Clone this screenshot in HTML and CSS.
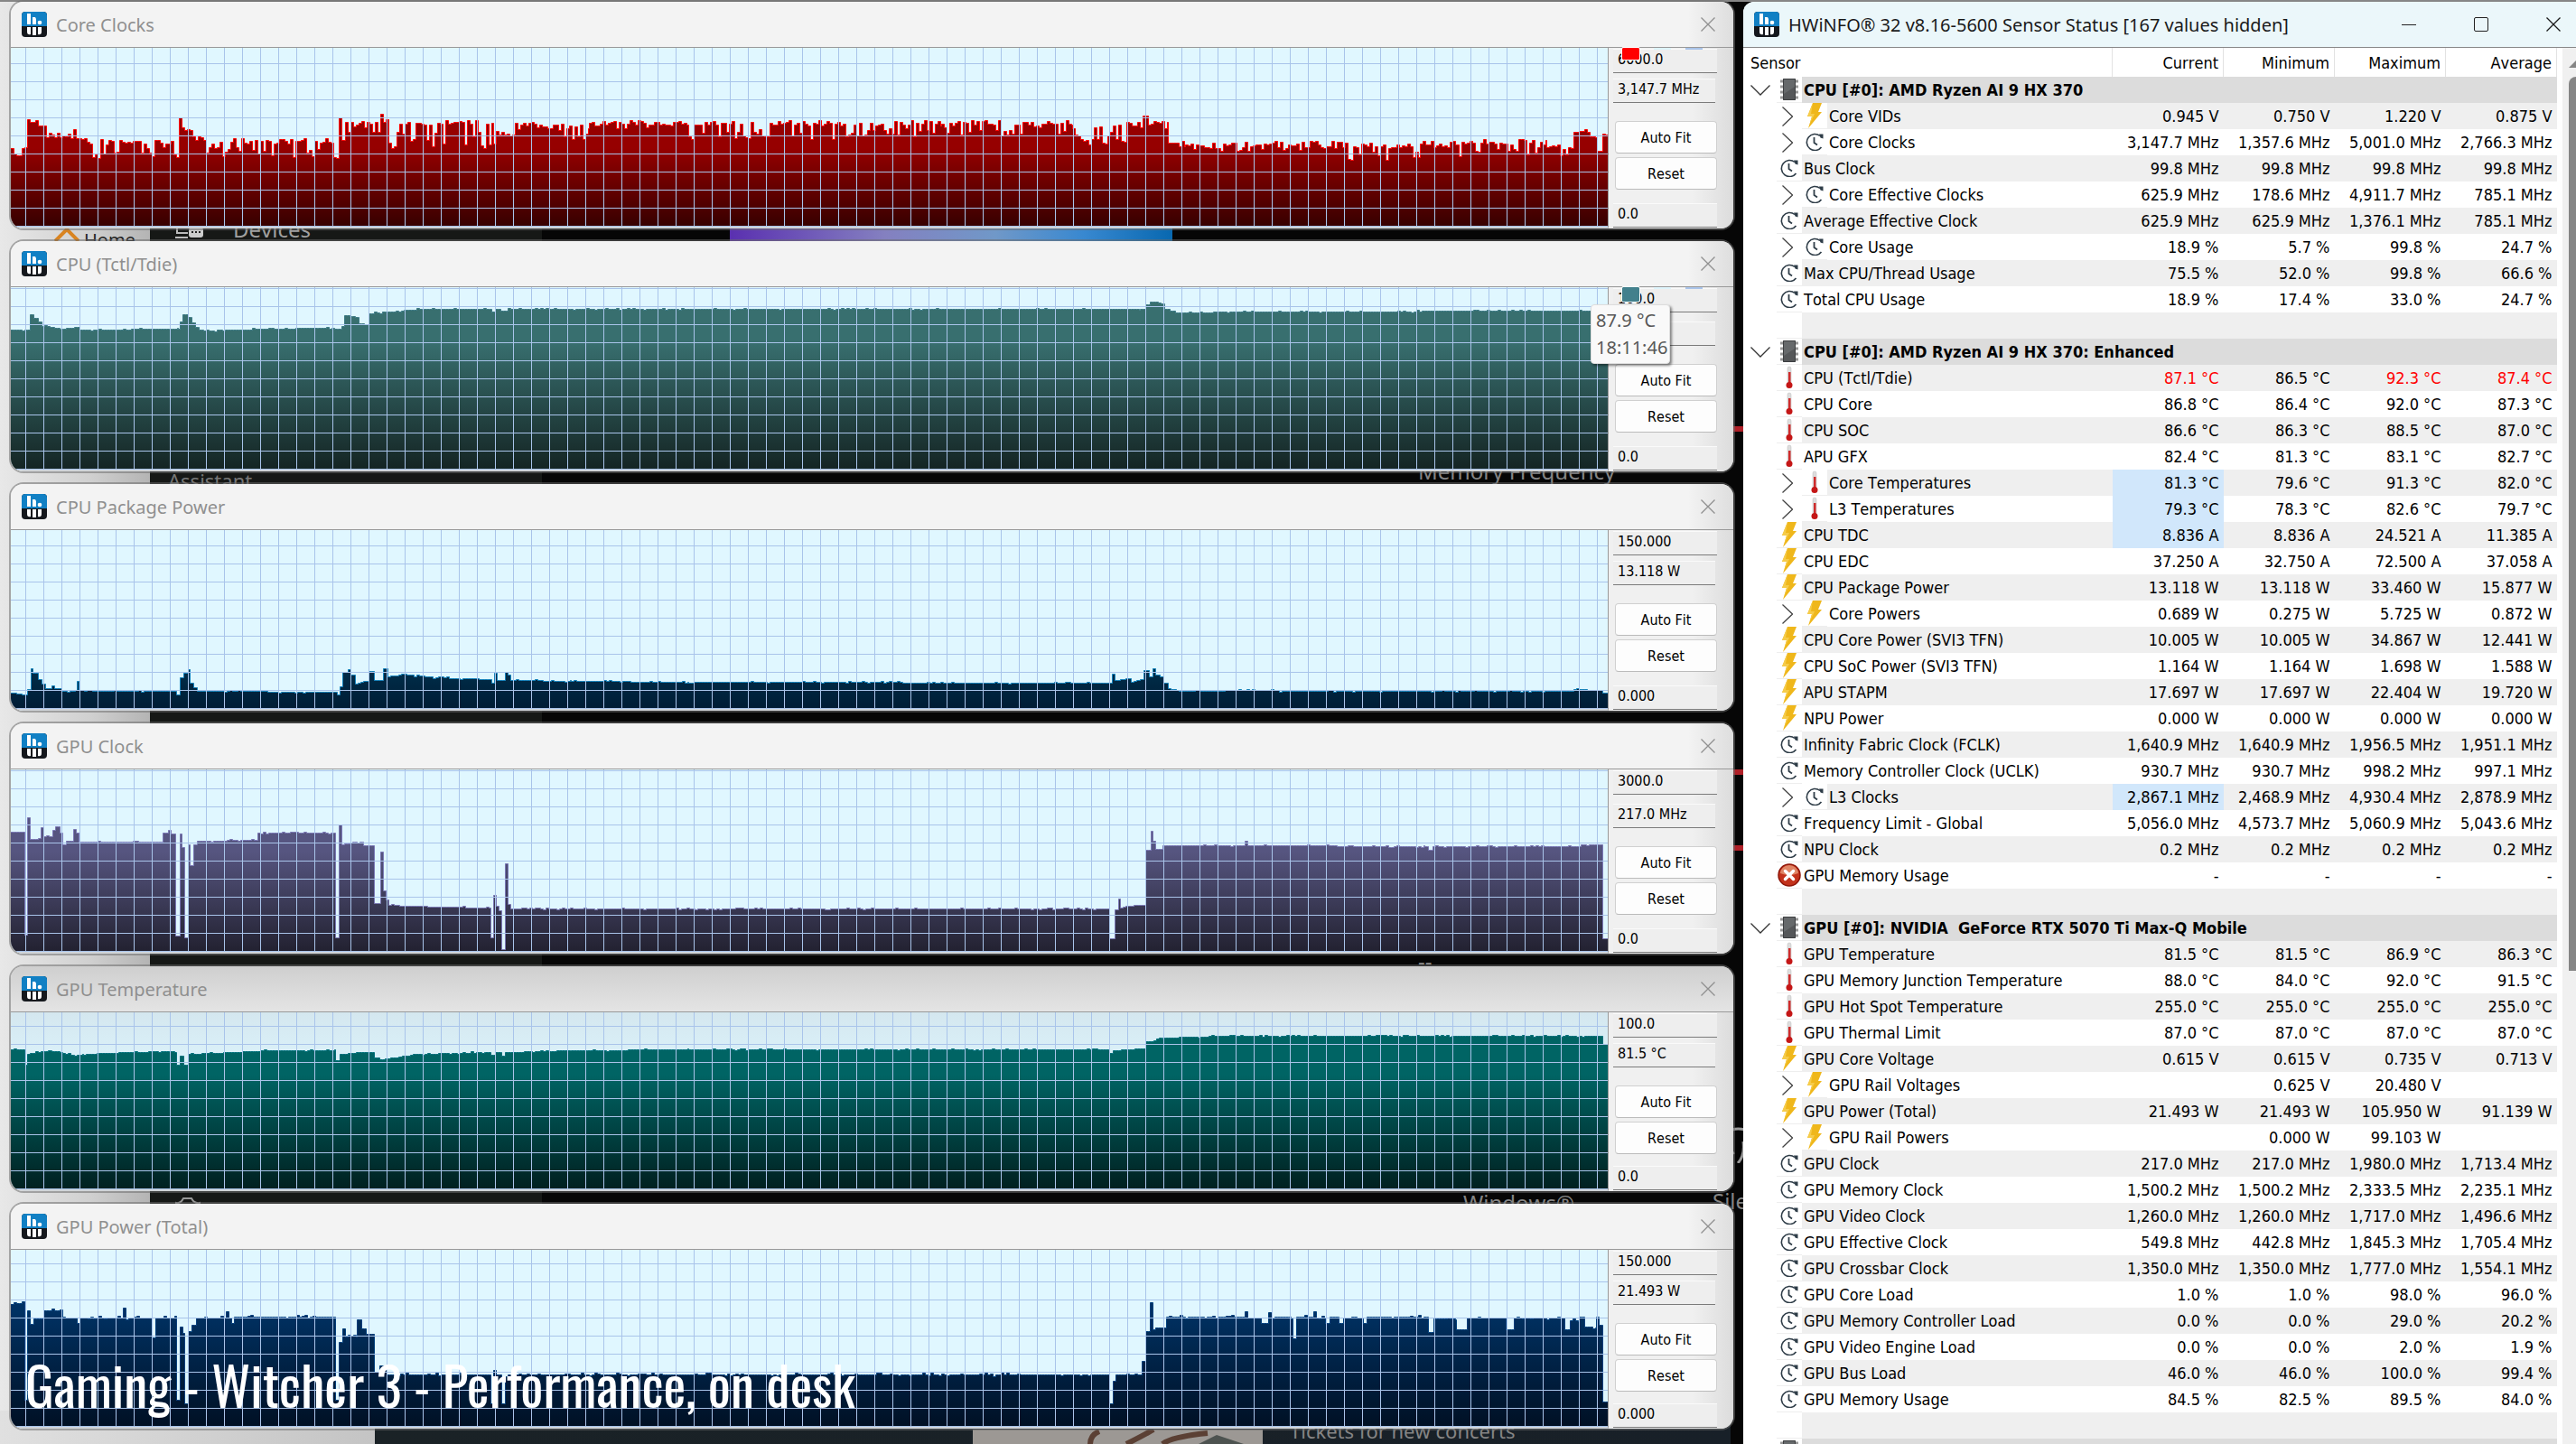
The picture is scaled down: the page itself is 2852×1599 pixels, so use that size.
FILE: index.html
```
<!DOCTYPE html>
<html lang="en">
<head>
<meta charset="utf-8">
<title>HWiNFO Sensor Status</title>
<link rel="stylesheet" href="styles.css">
</head>
<body>
<svg class="defs" aria-hidden="true">
  <symbol id="logo" viewBox="0 0 28 28">
    <rect width="28" height="28" rx="4" fill="#15181d"/>
    <path d="M0 16V4a4 4 0 0 1 4-4h20a4 4 0 0 1 4 4v12z" fill="#1180c4"/>
    <path d="M6 2h4v12H6zM12 6h3l1 2v6h-4z" fill="#fff"/>
    <circle cx="20" cy="12" r="2.300" fill="#fff"/>
    <path d="M6 17h4v8q-4 1-4-3zM12 17h4v9h-4zM18 17h4v5q0 4-4 3z" fill="#fff"/>
  </symbol>
  <symbol id="close" viewBox="0 0 16 16"><path d="M0.500 0.500l15 15M15.500 0.500l-15 15" fill="none" stroke="currentColor" stroke-width="1.300"/></symbol>
  <symbol id="down" viewBox="0 0 22 12"><path d="M0.500 0.500L11 11 21.500 0.500" fill="none" stroke="#333" stroke-width="1.300"/></symbol>
  <symbol id="right" viewBox="0 0 12 22"><path d="M0.500 0.500L11.500 11 0.500 21.500" fill="none" stroke="#444" stroke-width="1.300"/></symbol>
  <symbol id="chip" viewBox="0 0 20 26">
    <path d="M0 4h20M0 10h20M0 16h20M0 22h20" stroke="#999" stroke-width="3" stroke-dasharray="3 14"/>
    <rect x="3" y="1" width="14" height="24" rx="1" fill="#555759"/><path d="M4 2h12v8L4 18z" fill="#66696b"/>
    <path d="M3.500 1.500h13v23h-13z" fill="none" stroke="#3c3e40"/>
  </symbol>
  <symbol id="volt" viewBox="0 0 18 28"><path d="M7 0h10l-4 10h4L2 28l4-13H1z" fill="#efb71b"/><path d="M7 0L1 15h5L3.500 24 9 12H5z" fill="#f6cc4a"/></symbol>
  <symbol id="clock" viewBox="0 0 20 20">
    <path d="M17.500 16a9 9 0 1 1-1.500-12.500" fill="none" stroke="#2f3d48" stroke-width="1.600"/>
    <path d="M15 1.500h4.500v5l-3-1z" fill="#2f3d48"/>
    <path d="M9.500 5v6l3.500 2.500" fill="none" stroke="#2f3d48" stroke-width="1.800"/>
  </symbol>
  <symbol id="temp" viewBox="0 0 10 26">
    <rect x="3" y="1" width="4" height="20" rx="2" fill="#ddd" stroke="#bbb" stroke-width="0.500"/>
    <path d="M4 7h2.500v12H4z" fill="#cf2b2b"/><circle cx="5" cy="21.500" r="3.500" fill="#c41616"/>
  </symbol>
  <symbol id="error" viewBox="0 0 26 26">
    <circle cx="13" cy="13" r="12" fill="#c3321b" stroke="#8e1508" stroke-width="1.500"/>
    <path d="M3 11a10 9 0 0 1 20 0q-10 4-20 0z" fill="#e08565"/>
    <path d="M8.500 8.500l9 9M17.500 8.500l-9 9" stroke="#fff" stroke-width="3.500" stroke-linecap="round"/>
  </symbol>
</svg>

<div class="screen">
  <div class="desktop" aria-hidden="true">
    <div class="sheet"></div>
    <div class="panel"></div>
    <div class="banner"></div>
    <div class="footer-sheet"></div>
    <svg class="photo" viewBox="0 0 321 16" preserveAspectRatio="none"><rect width="321" height="16" fill="#9c9894"/><path d="M130 16q0-10 10-14M170 16q20-10 30-16M210 16q10-8 50-12" stroke="#5b4034" stroke-width="6" fill="none"/><path d="M250 16l20-10 30 10z" fill="#4d5350"/></svg>
    <svg class="home-icon" viewBox="0 0 28 16"><path d="M1 15L14 2l13 13" fill="none" stroke="#d98421" stroke-width="4"/></svg>
    <svg class="device-icon" viewBox="0 0 34 14"><path d="M4 0v6h12M2 11h14" stroke="#bbb" stroke-width="2" fill="none"/><rect x="17" y="0" width="16" height="11" rx="3" fill="#ccc"/><path d="M20 5h10" stroke="#222" stroke-width="2" stroke-dasharray="2 2"/></svg>
    <svg class="gear-icon" viewBox="0 0 28 8"><path d="M1 8V6q5 1 8-5h9q3 6 9 5v2" fill="none" stroke="#999" stroke-width="2"/></svg>
    <svg class="ring-icon" viewBox="0 0 24 40"><path d="M2 6Q10 0 22 3M4 32l6-4M14 40q8-8 6-24" fill="none" stroke="#999" stroke-width="3"/></svg>
    <span class="word home">Home</span>
    <span class="word devices">Devices</span>
    <span class="word assistant">Assistant</span>
    <span class="word memory">Memory Frequency</span>
    <span class="word windows">Windows®</span>
    <span class="word silent">Silent</span>
    <span class="word tickets">Tickets for new concerts</span>
    <span class="word dashes">--</span>
    <i class="mark mark-1"></i><i class="mark mark-2"></i><i class="mark mark-3"></i>
  </div>

  <main class="workspace">
    <div class="graphs">
      <section class="window core">
        <header class="titlebar"><svg class="logo"><use href="#logo"/></svg><h2>Core Clocks</h2><button class="close" aria-label="Close"><svg><use href="#close"/></svg></button></header>
        <div class="body">
          <div class="chart" data-series="core"></div>
          <div class="side">
            <div class="swatches"><i class="swatch line"></i><i class="swatch back"></i><i class="swatch grid"></i></div>
            <output class="box">6000.0</output><output class="box value">3,147.7 MHz</output>
            <div class="buttons"><button>Auto Fit</button><button>Reset</button></div>
            <output class="box low">0.0</output>
          </div>
        </div>
      </section>

      <section class="window tall tctl">
        <header class="titlebar"><svg class="logo"><use href="#logo"/></svg><h2>CPU (Tctl/Tdie)</h2><button class="close" aria-label="Close"><svg><use href="#close"/></svg></button></header>
        <div class="body">
          <div class="chart" data-series="tctl"></div>
          <div class="side">
            <div class="swatches"><i class="swatch line"></i><i class="swatch back"></i><i class="swatch grid"></i></div>
            <output class="box">100.0</output><output class="box value"></output>
            <div class="buttons"><button>Auto Fit</button><button>Reset</button></div>
            <output class="box low">0.0</output>
          </div>
          <div class="tooltip" role="tooltip">87.9 °C<br>18:11:46</div>
        </div>
      </section>

      <section class="window package">
        <header class="titlebar"><svg class="logo"><use href="#logo"/></svg><h2>CPU Package Power</h2><button class="close" aria-label="Close"><svg><use href="#close"/></svg></button></header>
        <div class="body">
          <div class="chart" data-series="package"></div>
          <div class="side">
            <output class="box">150.000</output><output class="box value">13.118 W</output>
            <div class="buttons"><button>Auto Fit</button><button>Reset</button></div>
            <output class="box low">0.000</output>
          </div>
        </div>
      </section>

      <section class="window tall gclock">
        <header class="titlebar"><svg class="logo"><use href="#logo"/></svg><h2>GPU Clock</h2><button class="close" aria-label="Close"><svg><use href="#close"/></svg></button></header>
        <div class="body">
          <div class="chart" data-series="gclock"></div>
          <div class="side">
            <output class="box">3000.0</output><output class="box value">217.0 MHz</output>
            <div class="buttons"><button>Auto Fit</button><button>Reset</button></div>
            <output class="box low">0.0</output>
          </div>
        </div>
      </section>

      <section class="window short gtemp">
        <header class="titlebar"><svg class="logo"><use href="#logo"/></svg><h2>GPU Temperature</h2><button class="close" aria-label="Close"><svg><use href="#close"/></svg></button></header>
        <div class="body">
          <div class="chart" data-series="gtemp"></div>
          <div class="side">
            <output class="box">100.0</output><output class="box value">81.5 °C</output>
            <div class="buttons"><button>Auto Fit</button><button>Reset</button></div>
            <output class="box low">0.0</output>
          </div>
        </div>
      </section>

      <section class="window short gpower">
        <header class="titlebar"><svg class="logo"><use href="#logo"/></svg><h2>GPU Power (Total)</h2><button class="close" aria-label="Close"><svg><use href="#close"/></svg></button></header>
        <div class="body">
          <div class="chart" data-series="gpower"></div>
          <div class="side">
            <output class="box">150.000</output><output class="box value">21.493 W</output>
            <div class="buttons"><button>Auto Fit</button><button>Reset</button></div>
            <output class="box low">0.000</output>
          </div>
        </div>
      </section>
    </div>

    <section class="sensors">
      <header class="titlebar">
        <svg class="logo"><use href="#logo"/></svg>
        <h1>HWiNFO® 32 v8.16-5600 Sensor Status [167 values hidden]</h1>
        <button class="minimize" aria-label="Minimize"></button>
        <button class="maximize" aria-label="Maximize"></button>
        <button class="close" aria-label="Close"><svg><use href="#close"/></svg></button>
      </header>
      <div class="list">
        <table>
          <colgroup><col><col class="num"><col class="num"><col class="num"><col class="num"></colgroup>
          <thead><tr><th>Sensor</th><th>Current</th><th>Minimum</th><th>Maximum</th><th>Average</th></tr></thead>
          <tbody id="rows"></tbody>
        </table>
        <div class="scrollbar"><i class="arrow"></i><i class="thumb"></i></div>
      </div>
    </section>
  </main>

  <p class="caption">Gaming - Witcher 3 - Performance, on desk</p>
</div>
<script src="app.js"></script>
</body>
</html>
```
FILE: styles.css
```
* { box-sizing: border-box; }
html, body { margin: 0; height: 100%; }
body { font-family: "DejaVu Sans Condensed", "DejaVu Sans", sans-serif; font-stretch: condensed; font-kerning: none; font-size: 18px; color: #000; background: #060606; }
button { font: inherit; color: inherit; border: 0; padding: 0; background: none; }
h1, h2, p { margin: 0; font-weight: 400; }
.defs { position: absolute; width: 0; height: 0; }
.screen { position: relative; height: 100vh; overflow: hidden; }

/* desktop seen between the windows */
.desktop { position: absolute; inset: 0; background: #060606; border-top: 2px solid #868686; overflow: hidden; }
.desktop > * { position: absolute; }
.sheet { left: 0; top: 0; bottom: 0; width: 166px; background: linear-gradient(90deg, #e8e8e8, #d0d0d0 60%, #b4b4b4); }
.panel { left: 166px; top: 0; bottom: 0; width: 434px; background: #161816; }
.banner { left: 808px; top: 250px; width: 490px; height: 16px; background: linear-gradient(90deg, #5a30b0, #8480c0 35%, #7098c8 60%, #3888d0 80%, #0868b0); }
.footer-sheet { left: 0; right: 936px; top: 1560px; bottom: 0; background: linear-gradient(90deg, #e0e0e0, #c4c4c4 415px, #1a2226 415px, #182028); }
.photo { left: 1077px; top: 1581px; width: 321px; height: 16px; }
.home-icon { left: 60px; top: 250px; width: 28px; height: 16px; }
.device-icon { left: 192px; top: 250px; width: 34px; height: 14px; }
.gear-icon { left: 194px; top: 1324px; width: 28px; height: 8px; }
.ring-icon { left: 1910px; top: 1246px; width: 24px; height: 40px; }
.word { font-family: "Noto Sans", sans-serif; font-size: 24px; line-height: 32px; color: #858585; white-space: nowrap; }
.home { left: 93px; top: 248px; font-size: 20px; color: #222; }
.devices { left: 258px; top: 236px; color: #a0a0a0; }
.assistant { left: 186px; top: 514px; font-size: 22px; color: #777; }
.memory { left: 1570px; top: 504px; }
.windows { left: 1620px; top: 1314px; }
.silent { left: 1896px; top: 1312px; }
.tickets { left: 1428px; top: 1566px; font-size: 22px; }
.dashes { left: 1570px; top: 1046px; }
.mark { left: 1918px; width: 14px; height: 6px; background: #b02028; }
.mark-1 { top: 470px; } .mark-2 { top: 850px; } .mark-3 { top: 934px; }

/* windows */
.workspace { position: relative; height: 100%; display: grid; grid-template-columns: minmax(0, 1fr) 922px; gap: 11px; padding: 2px 0 0 12px; }
.graphs { display: flex; flex-direction: column; gap: 14px; min-width: 0; }
.window { background: #f3f3f3; border-radius: 14px; overflow: hidden; box-shadow: 0 0 0 2px #6b6b6b88; flex: none; }
.titlebar { display: flex; align-items: center; height: 51px; padding: 0 20px 0 12px; font-family: "Noto Sans", sans-serif; font-size: 20px; font-kerning: auto; border-bottom: 1px solid #999; }
.window .titlebar { color: #8f8f8f; background: linear-gradient(270deg, #dedede, #f3f3f3 50px); }
.titlebar h1, .titlebar h2 { flex: 1; font-size: inherit; margin-left: 10px; white-space: nowrap; }
.logo { width: 28px; height: 28px; flex: none; }
.close svg { display: block; width: 16px; height: 16px; }
.body { position: relative; display: grid; grid-template-columns: minmax(0, 1fr) 138px; height: 200px; }
.tall .body { height: 204px; }
.short .body { height: 198px; }
.chart { position: relative; background: #e0f7ff; border-right: 1px solid #999; border-bottom: 2px solid #d0d4d8; overflow: hidden; }
.chart svg { display: block; width: 100%; height: 100%; }
.chart::after { content: ""; position: absolute; inset: 0; background-image: linear-gradient(0deg, #a9c4ea 1px, transparent 1px), linear-gradient(90deg, #a9c4ea 1px, transparent 1px); background-size: 20px 20px; background-position: 16px bottom; }
.side { position: relative; display: flex; flex-direction: column; padding: 1px 18px 1px 5px; font-size: 16px; background: linear-gradient(270deg, #dcdcdc, #f0f0f0 45px); }
.box { height: 27px; padding: 1px 5px; line-height: 20px; border-bottom: 1px solid #7b7b7b; border-top: 1px solid #fafafa; background: #eee; }
.value { margin-top: 6px; margin-right: 2px; }
.tall .value { margin-top: 10px; }
.buttons { display: flex; flex-direction: column; gap: 4px; margin-top: 20px; padding-left: 2px; }
.buttons button { height: 36px; background: #fdfdfd; border: 1px solid #d0d0d0; border-bottom-color: #bbb; border-radius: 4px; }
.low { margin-top: auto; }
.swatches { position: absolute; top: 0; left: 15px; display: flex; gap: 16px; align-items: flex-start; }
.swatch { width: 19px; height: 2px; }
.swatch.line { height: 13px; background: red; outline: 1px solid #fff; border-radius: 1px; }
.tctl .swatch.line { height: 16px; background: #42808c; }
.swatch.back { background: #def5fc; }
.swatch.grid { background: #a9c4ea; }
.tooltip { position: absolute; right: 70px; top: 19px; width: 88px; padding: 2px 5px; font: 20px/30px "Noto Sans", sans-serif; color: #575757; background: #f9f9f9; border: 1px solid #ddd; border-radius: 4px; box-shadow: 2px 2px 3px #0007; white-space: nowrap; }
.gtemp .titlebar { background: linear-gradient(#cfcfcf, #e4e4e4); }
.gtemp .chart { background: linear-gradient(#d4e7ef, #dcf3fb 30%); }

/* sensor table */
.sensors { min-width: 0; height: 100%; overflow: hidden; background: #fff; border-top-left-radius: 12px; }
.sensors .titlebar { background: #ebf7fa; padding-right: 17px; color: #1a1a1a; border-color: #888; }
.minimize { width: 16px; height: 1px; background: #222; margin-right: 64px; }
.maximize { width: 16px; height: 16px; border: 1px solid #222; border-radius: 2px; margin-right: 64px; }
.list { display: grid; grid-template-columns: minmax(0, 1fr) 15px; gap: 6px; }
table { width: 100%; table-layout: fixed; border-collapse: collapse; }
.num { width: 123px; }
th { height: 32px; padding: 1px 5px 0; font-weight: 400; text-align: right; border-right: 1px solid #e2e2e2; }
th:first-child { text-align: left; padding-left: 8px; }
td { height: 29px; padding: 1px 5px 0; line-height: 28px; text-align: right; white-space: nowrap; }
td.name { padding: 0; }
.item { display: flex; text-align: left; }
.toggle { flex: none; display: flex; align-items: center; justify-content: center; width: 37px; height: 29px; }
.icon { flex: none; display: flex; align-items: center; justify-content: center; width: 28px; height: 29px; background: #fff; border-bottom: 1px solid #eee; }
.label { flex: 1; min-width: 0; height: 29px; padding: 1px 0 0 2px; white-space: pre; }
.child .toggle { width: 28px; margin-left: 37px; padding-right: 4px; }
.odd td:not(.name), .odd .label { background: #efefef; }
.group .label, .group td:not(.name) { background: #dcdcdc; font-weight: 700; }
.group .item { position: relative; z-index: 1; }
.hot { color: #f00; }
.list tbody td.new { background: #d1e7fb; }
.i-down { width: 22px; height: 12px; } .i-right { width: 12px; height: 22px; }
.i-chip { width: 20px; height: 26px; } .i-volt { width: 18px; height: 28px; }
.i-clock { width: 20px; height: 20px; } .i-temp { width: 10px; height: 26px; } .i-error { width: 26px; height: 26px; }
.scrollbar { background: #f0f0f0; display: flex; flex-direction: column; align-items: flex-end; }
.arrow { margin-top: 14px; border: solid transparent; border-width: 0 0 8px 8px; border-bottom-color: #858585; }
.thumb { margin-top: 10px; width: 8px; height: 990px; background: #858585; border-top-left-radius: 8px; }

.caption { position: absolute; left: 28px; bottom: 30px; font-family: Oswald, "Roboto Condensed", "Liberation Sans Narrow", "Open Sans Condensed", sans-serif; font-size: 59px; line-height: 72px; font-kerning: auto; color: #fff; white-space: nowrap; }
```
FILE: app.js
```
// Sensor rows: icon|name|current|minimum|maximum|average. "+" marks an expandable row,
// "!" a critical value, "*" a value that has just changed.
const rows = `#|CPU [#0]: AMD Ryzen AI 9 HX 370
+volt|Core VIDs|0.945 V|0.750 V|1.220 V|0.875 V
+clock|Core Clocks|3,147.7 MHz|1,357.6 MHz|5,001.0 MHz|2,766.3 MHz
clock|Bus Clock|99.8 MHz|99.8 MHz|99.8 MHz|99.8 MHz
+clock|Core Effective Clocks|625.9 MHz|178.6 MHz|4,911.7 MHz|785.1 MHz
clock|Average Effective Clock|625.9 MHz|625.9 MHz|1,376.1 MHz|785.1 MHz
+clock|Core Usage|18.9 %|5.7 %|99.8 %|24.7 %
clock|Max CPU/Thread Usage|75.5 %|52.0 %|99.8 %|66.6 %
clock|Total CPU Usage|18.9 %|17.4 %|33.0 %|24.7 %
-
#|CPU [#0]: AMD Ryzen AI 9 HX 370: Enhanced
temp|CPU (Tctl/Tdie)|!87.1 °C|86.5 °C|!92.3 °C|!87.4 °C
temp|CPU Core|86.8 °C|86.4 °C|92.0 °C|87.3 °C
temp|CPU SOC|86.6 °C|86.3 °C|88.5 °C|87.0 °C
temp|APU GFX|82.4 °C|81.3 °C|83.1 °C|82.7 °C
+temp|Core Temperatures|*81.3 °C|79.6 °C|91.3 °C|82.0 °C
+temp|L3 Temperatures|*79.3 °C|78.3 °C|82.6 °C|79.7 °C
volt|CPU TDC|*8.836 A|8.836 A|24.521 A|11.385 A
volt|CPU EDC|37.250 A|32.750 A|72.500 A|37.058 A
volt|CPU Package Power|13.118 W|13.118 W|33.460 W|15.877 W
+volt|Core Powers|0.689 W|0.275 W|5.725 W|0.872 W
volt|CPU Core Power (SVI3 TFN)|10.005 W|10.005 W|34.867 W|12.441 W
volt|CPU SoC Power (SVI3 TFN)|1.164 W|1.164 W|1.698 W|1.588 W
volt|APU STAPM|17.697 W|17.697 W|22.404 W|19.720 W
volt|NPU Power|0.000 W|0.000 W|0.000 W|0.000 W
clock|Infinity Fabric Clock (FCLK)|1,640.9 MHz|1,640.9 MHz|1,956.5 MHz|1,951.1 MHz
clock|Memory Controller Clock (UCLK)|930.7 MHz|930.7 MHz|998.2 MHz|997.1 MHz
+clock|L3 Clocks|*2,867.1 MHz|2,468.9 MHz|4,930.4 MHz|2,878.9 MHz
clock|Frequency Limit - Global|5,056.0 MHz|4,573.7 MHz|5,060.9 MHz|5,043.6 MHz
clock|NPU Clock|0.2 MHz|0.2 MHz|0.2 MHz|0.2 MHz
error|GPU Memory Usage|-|-|-|-
-
#|GPU [#0]: NVIDIA  GeForce RTX 5070 Ti Max-Q Mobile
temp|GPU Temperature|81.5 °C|81.5 °C|86.9 °C|86.3 °C
temp|GPU Memory Junction Temperature|88.0 °C|84.0 °C|92.0 °C|91.5 °C
temp|GPU Hot Spot Temperature|255.0 °C|255.0 °C|255.0 °C|255.0 °C
temp|GPU Thermal Limit|87.0 °C|87.0 °C|87.0 °C|87.0 °C
volt|GPU Core Voltage|0.615 V|0.615 V|0.735 V|0.713 V
+volt|GPU Rail Voltages||0.625 V|20.480 V|
volt|GPU Power (Total)|21.493 W|21.493 W|105.950 W|91.139 W
+volt|GPU Rail Powers||0.000 W|99.103 W|
clock|GPU Clock|217.0 MHz|217.0 MHz|1,980.0 MHz|1,713.4 MHz
clock|GPU Memory Clock|1,500.2 MHz|1,500.2 MHz|2,333.5 MHz|2,235.1 MHz
clock|GPU Video Clock|1,260.0 MHz|1,260.0 MHz|1,717.0 MHz|1,496.6 MHz
clock|GPU Effective Clock|549.8 MHz|442.8 MHz|1,845.3 MHz|1,705.4 MHz
clock|GPU Crossbar Clock|1,350.0 MHz|1,350.0 MHz|1,777.0 MHz|1,554.1 MHz
clock|GPU Core Load|1.0 %|1.0 %|98.0 %|96.0 %
clock|GPU Memory Controller Load|0.0 %|0.0 %|29.0 %|20.2 %
clock|GPU Video Engine Load|0.0 %|0.0 %|2.0 %|1.9 %
clock|GPU Bus Load|46.0 %|46.0 %|100.0 %|99.4 %
clock|GPU Memory Usage|84.5 %|82.5 %|89.5 %|84.0 %
-
#|`.split("\n");

const icon = n => `<svg class="i-${n}"><use href="#${n}"/></svg>`;
document.getElementById("rows").innerHTML = rows.map((line, i) => {
  let [kind, label = "", ...vals] = line.split("|");
  const group = kind === "#", child = kind[0] === "+";
  if (child) kind = kind.slice(1);
  const glyph = group ? icon("chip") : kind === "-" ? "" : icon(kind);
  const toggle = group && label ? icon("down") : child ? icon("right") : "";
  const cells = [0, 1, 2, 3].map(k => {
    const v = vals[k] || "";
    const cls = v[0] === "!" ? ' class="hot"' : v[0] === "*" ? ' class="new"' : "";
    return `<td${cls}>${v.replace(/^[!*]/, "")}</td>`;
  }).join("");
  const cls = [group && "group", child && "child", !group && i % 2 && "odd"].filter(Boolean).join(" ");
  return `<tr class="${cls}"><td class="name"><div class="item"><span class="toggle">${toggle}</span><span class="icon">${glyph}</span><span class="label">${label}</span></div></td>${cells}</tr>`;
}).join("");

// Each series: key points "x:height", held until the next one; long gentle runs are ramps.
// The core clock series is a list of runs: from, to, upper level, lower level, share of dips.
const series = {
  core: { stroke: "#f00", top: "#960000", bottom: "#360000", start: 0.56, runs: [
    [0,6,86,80,0],[6,12,79,74,0],[12,18,90,84,0],[18,30,120,113,0],[30,39,114,110,0],[39,48,107,96,.3],[48,69,104,90,.4],[69,72,107,107,0],[72,84,98,93,0],[84,102,96,72,.6],[102,186,96,76,.4],
    [186,189,120,120,0],[189,201,110,102,0],[201,216,100,94,0],[216,363,97,74,.45],[363,366,120,120,0],[366,370,95,95,0],[370,409,116,102,.3],[409,412,124,124,0],[412,534,118,86,.5],[534,558,105,90,.3],
    [558,582,115,103,.2],[582,640,113,96,.4],[640,750,117,108,.2],[750,948,117,96,.45],[948,1030,117,99,.45],[1030,1175,117,99,.4],[1175,1235,114,90,.45],[1235,1253,115,105,0],[1253,1259,122,119,0],
    [1259,1281,116,105,.2],[1281,1300,96,86,.2],[1300,1480,94,83,.4],[1480,1560,92,72,.4],[1560,1600,95,86,.2],[1600,1700,96,77,.35],[1700,1730,90,73,.4],[1730,1748,107,100,0],[1748,1756,100,98,0],[1756,1762,83,83,0],[1762,1770,102,99,0]] },
  tctl: { stroke: "#3e7b86", top: "#386f6f", bottom: "#142423", start: 0.3, jitter: 1, points:
    "0:154 21:171 25:167 30:163 34:158 45:157 55:155 73:157 76:154 185:155 187:163 190:171 196:168 200:162 204:157 208:154 213:153 240:154 340:156 362:155 366:158 369:170 381:168 385:161 391:160 396:172 402:173 420:174 440:176 457:177 530:177 532:174 536:177 542:175 550:177 1250:177 1256:182 1261:185 1273:183 1277:177 1283:175 1289:173 1370:174 1740:175 1770:175" },
  package: { stroke: "#1583bd", top: "#002c48", bottom: "#001c34", start: 0.8, jitter: 1, points:
    "0:17 15:15 18:21 22:44 24:39 30:32 34:27 38:22 45:25 48:22 56:19 73:30 75:19 179:19 183:15 187:34 191:39 196:43 198:28 202:23 206:19 357:18 361:15 364:24 367:40 373:43 376:37 381:27 391:30 396:41 402:31 412:44 417:36 440:37 470:34 528:32 532:28 535:39 538:31 547:40 550:37 553:31 620:30 750:29 1213:28 1219:38 1222:31 1235:33 1240:29 1250:32 1254:42 1260:35 1264:44 1267:37 1272:35 1276:28 1281:22 1293:19 1395:20 1410:19 1725:19 1730:21 1758:20 1762:17 1770:17" },
  gclock: { stroke: "#7a78b5", top: "#565580", bottom: "#222130", start: 0.45, jitter: 1, points:
    "0:132 15:18 18:148 21:124 33:137 36:127 46:134 49:138 54:131 57:118 61:122 69:135 72:131 75:121 160:121 168:131 174:134 177:130 182:17 187:130 189:115 192:15 196:118 198:95 202:118 206:122 269:123 273:131 359:15 363:140 366:118 380:121 390:117 402:53 409:110 412:67 415:57 418:51 440:50 520:48 531:15 534:62 537:50 540:45 543:2 547:97 550:52 553:47 1216:14 1222:46 1226:58 1228:48 1245:51 1256:112 1262:133 1264:122 1267:113 1275:117 1363:117 1366:122 1369:117 1565:116 1569:112 1574:116 1735:116 1738:118 1762:14 1770:14" },
  gtemp: { stroke: "#006f7a", top: "#006464", bottom: "#002020", start: 0.35, jitter: 1, points:
    "0:154 15:137 18:149 35:152 45:153 57:150 70:147 80:149 160:152 183:137 187:147 191:137 196:149 270:152 280:153 359:142 364:149 385:151 402:145 408:143 430:146 455:149 525:151 531:148 536:151 543:147 547:151 620:153 750:154 1212:154 1216:150 1220:153 1250:155 1256:163 1265:165 1275:167 1340:169 1762:160 1770:160" },
  gpower: { stroke: "#003f7c", top: "#003162", bottom: "#001024", start: 0.35, jitter: 2, points:
    "0:136 15:29 18:128 21:113 25:119 36:128 57:120 73:114 76:120 124:131 127:120 156:98 160:120 183:29 187:110 190:103 192:25 196:105 200:112 205:120 238:127 241:120 244:114 247:121 359:29 363:93 367:108 370:99 383:118 388:108 393:102 402:60 408:67 416:57 531:25 534:62 537:57 543:25 547:57 1216:25 1220:50 1223:57 1252:72 1256:105 1261:137 1264:107 1275:109 1279:121 1366:127 1369:120 1384:114 1392:126 1396:121 1419:97 1423:121 1442:127 1445:120 1455:114 1460:121 1470:114 1475:120 1497:114 1501:121 1569:104 1575:119 1600:107 1612:120 1655:107 1664:120 1720:107 1726:117 1736:121 1742:109 1755:121 1758:112 1762:27 1770:27" }
};

let seed = 7;
const rand = () => (seed = (seed * 16807) % 2147483647) / 2147483647;

function samples(s) {
  const out = [];
  if (s.runs) {
    for (const [a, b, hi, lo, dips] of s.runs)
      for (let x = a; x < b; x += 3)
        out.push([x, dips && rand() < dips ? lo + rand() * (hi - lo) * 0.6 : hi - rand() * Math.min(6, Math.abs(hi - lo))]);
    return out;
  }
  const pts = s.points.split(" ").map(p => p.split(":").map(Number));
  pts.slice(0, -1).forEach(([x0, h0], i) => {
    const [x1, h1] = pts[i + 1], len = x1 - x0;
    const ramp = len > 9 && Math.abs(h1 - h0) < 4;
    for (let x = x0; x < x1; x += 3) {
      const noise = len > 9 && rand() < 0.35 ? Math.round((rand() - 0.4) * 2 * s.jitter) : 0;
      out.push([x, (ramp ? h0 + (h1 - h0) * (x - x0) / len : h0) + noise]);
    }
  });
  return out;
}

document.querySelectorAll(".chart").forEach(el => {
  const name = el.dataset.series, s = series[name];
  const H = el.clientHeight, W = 1768;
  let d = "";
  samples(s).forEach(([x, h], i) => {
    const y = H - Math.round(h) - 0.5;
    d += i ? `H${x + 0.5}V${y}` : `M-2 ${y}`;
  });
  d += `H${W + 4}`;
  el.innerHTML = `<svg viewBox="0 0 ${W} ${H}" preserveAspectRatio="none"><defs><linearGradient id="g-${name}" gradientUnits="userSpaceOnUse" x1="0" y1="0" x2="0" y2="${H}"><stop offset="${s.start}" stop-color="${s.top}"/><stop offset="1" stop-color="${s.bottom}"/></linearGradient></defs><path d="${d}V${H + 4}H-2z" fill="url(#g-${name})"/><path d="${d}" fill="none" stroke="${s.stroke}"/></svg>`;
});
```
